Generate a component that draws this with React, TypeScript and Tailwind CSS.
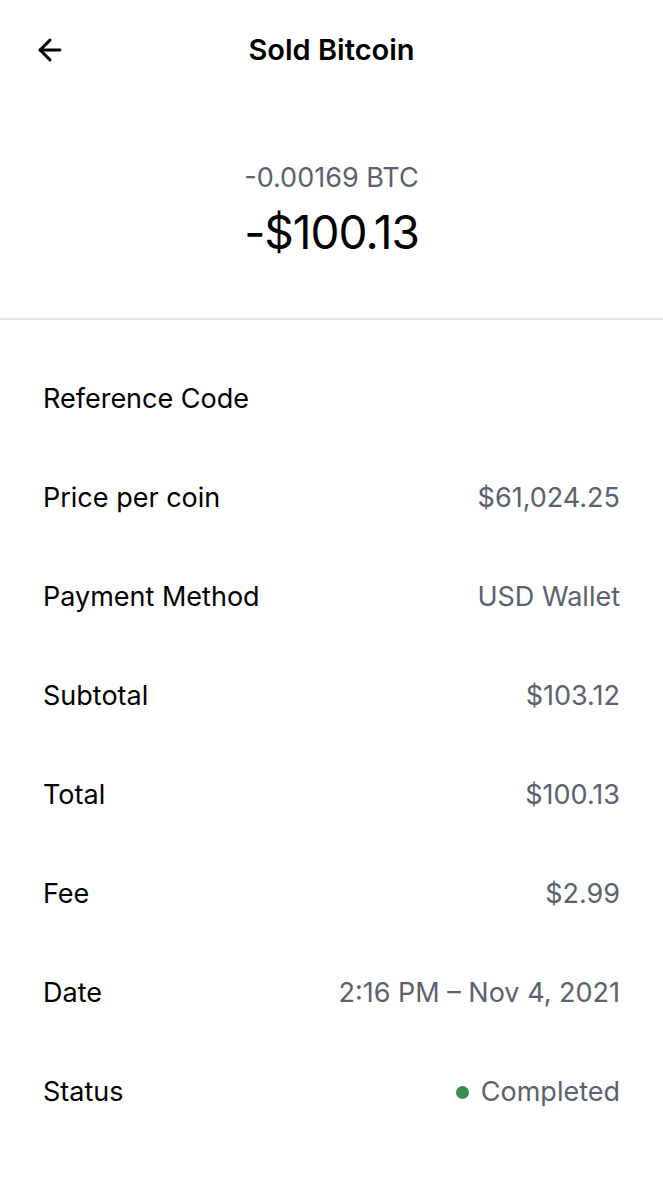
import { ArrowLeft } from "lucide-react"

const rows: { label: string; value: string; status?: boolean }[] = [
  { label: "Reference Code", value: "" },
  { label: "Price per coin", value: "$61,024.25" },
  { label: "Payment Method", value: "USD Wallet" },
  { label: "Subtotal", value: "$103.12" },
  { label: "Total", value: "$100.13" },
  { label: "Fee", value: "$2.99" },
  { label: "Date", value: "2:16 PM – Nov 4, 2021" },
  { label: "Status", value: "Completed", status: true },
]

export default function App() {
  return (
    <div className="w-[663px] h-[1200px] bg-white text-black font-['Inter',sans-serif] overflow-hidden">
      <div className="relative h-[100px] flex items-center justify-center">
        <ArrowLeft className="absolute left-[33px] top-[33px] w-[34px] h-[34px]" strokeWidth={2.1} />
        <h1 className="text-[29px] font-semibold">Sold Bitcoin</h1>
      </div>

      <div className="flex flex-col items-center pt-[61px] h-[218px]">
        <p className="text-[27px] leading-[34px] text-[#5b616e]">-0.00169 BTC</p>
        <p className="mt-[12px] text-[46px] leading-[50px] tracking-[-1px]">-$100.13</p>
      </div>

      <div className="h-[2px] bg-[#e3e4e6]" />

      <div className="pt-[30px]">
        {rows.map((row) => (
          <div key={row.label} className="h-[99px] flex items-center justify-between px-[43px] text-[27px]">
            <span>{row.label}</span>
            <span className="flex items-center gap-3 text-[#5b616e]">
              {row.status && <span className="w-[13px] h-[13px] rounded-full bg-[#3a8a52]" />}
              {row.value}
            </span>
          </div>
        ))}
      </div>
    </div>
  )
}
